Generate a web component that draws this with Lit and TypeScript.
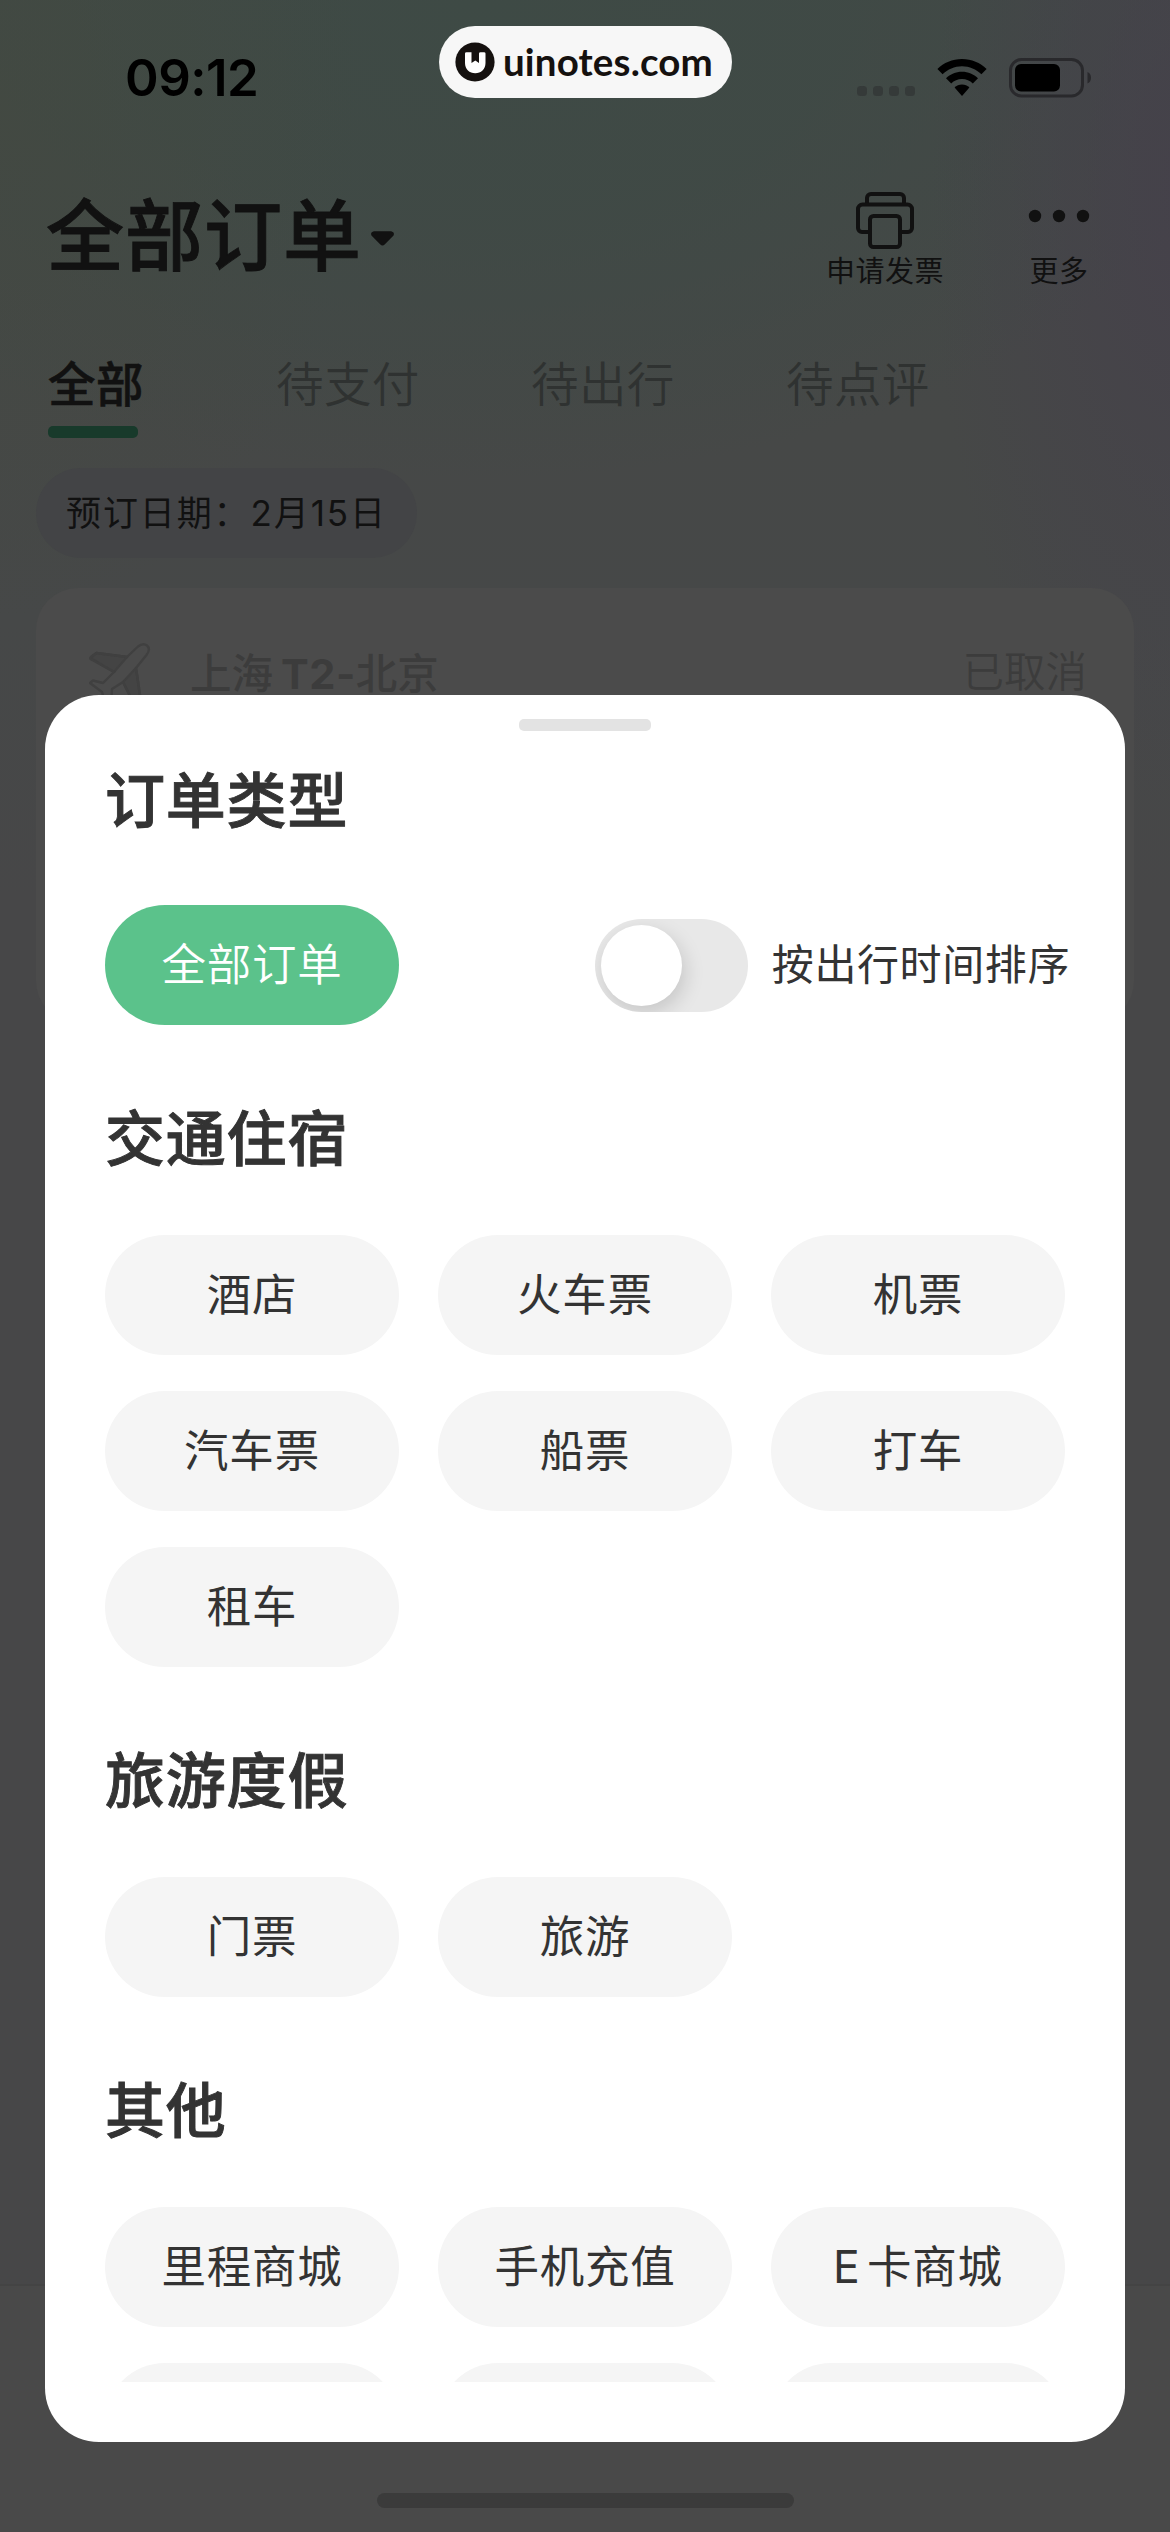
import { LitElement, html, css, svg } from "lit";
import { customElement } from "lit/decorators.js";

interface Section {
  title: string;
  items: string[];
}

const TABS = ["全部", "待支付", "待出行", "待点评"];

const SECTIONS: Section[] = [
  { title: "交通住宿", items: ["酒店", "火车票", "机票", "汽车票", "船票", "打车", "租车"] },
  { title: "旅游度假", items: ["门票", "旅游"] },
  { title: "其他", items: ["里程商城", "手机充值", "E 卡商城", "", "", ""] },
];

const wifiIcon = svg`<svg class="wifi" viewBox="0 0 50 37">
  <path d="M25 0C34.6 0 43.300 3.700 49.600 10.100L44.400 15.300C39.300 10.300 32.500 7.300 25 7.300S10.700 10.300 5.600 15.300L.4 10.100C6.700 3.700 15.400 0 25 0Z"/>
  <path d="M25 12.700C31.200 12.700 36.800 15.200 41 19.200L35.800 24.400C33 21.700 29.200 20.100 25 20.100S17 21.700 14.200 24.400L9 19.200C13.200 15.200 18.800 12.700 25 12.700Z"/>
  <path d="M25 25.400C27.900 25.400 30.500 26.600 32.400 28.600L25 37L17.600 28.600C19.500 26.600 22.100 25.400 25 25.400Z"/>
</svg>`;

const batteryIcon = svg`<svg class="battery" viewBox="0 0 84 40">
  <rect x="1.500" y="1.500" width="72" height="36.500" rx="11" fill="none" stroke="#29292c" stroke-width="3"/>
  <rect x="6" y="6" width="45" height="27.500" rx="6" fill="#000"/>
  <path d="M78.500 14C81 15 82 17.300 82 19.750S81 24.500 78.500 25.500Z" fill="#29292c"/>
</svg>`;

const printerIcon = svg`<svg class="printer" viewBox="0 0 60 60" fill="none" stroke="#111" stroke-width="4">
  <path d="M12 13V7a4 4 0 0 1 4-4H45a4 4 0 0 1 4 4V13"/>
  <path d="M15 41H7A4 4 0 0 1 3 37V18A4.500 4.500 0 0 1 7.500 13.500H52.500A4.500 4.500 0 0 1 57 18V37A4 4 0 0 1 53 41H45"/>
  <rect x="15" y="25" width="30" height="31" rx="3.500"/>
</svg>`;

const planeIcon = svg`<svg class="plane" viewBox="14 12 62 72" fill="none" stroke="#404040" stroke-width="2.400" stroke-linejoin="round">
  <path d="M52 27L21.500 23L15.500 28L39 42Z" fill="#444444"/>
  <path d="M61 38L66 72L60 76L48 52Z" fill="#444444"/>
  <path d="M52 27L63 16.500Q68 12.500 72 15.500Q76 19 71.500 25L61 38L66 72L60 76L48 52L37 59L36 76L30 72L27 62L15 53L18 50.500L28 53L39 42L15.500 29Q14 27 21.500 23Z"/>
</svg>`;

const logoIcon = svg`<svg class="logo" viewBox="0 0 40 40">
  <circle cx="20" cy="20" r="19.600" fill="#15110f"/>
  <path d="M10 11.500Q10 10.200 11.500 10.200H16.500V21L20.300 18.500L24 21V11.500Q24 10.200 25.500 10.200H29Q30.500 10.200 30.500 11.500V21C30.500 27.500 26 31.300 20.250 31.300S10 27.500 10 21Z" fill="#fff"/>
</svg>`;

@customElement("app-root")
export class AppRoot extends LitElement {
  static styles = css`
    :host {
      display: block;
      font-family: Inter, "Noto Sans CJK SC", sans-serif;
    }
    .screen {
      position: relative;
      width: 1170px;
      height: 2532px;
      overflow: hidden;
      display: flex;
      flex-direction: column;
      color: #111;
      background:
        radial-gradient(ellipse 260px 620px at 1190px 190px, rgba(69, 64, 75, 0.85) 0%, rgba(69, 64, 75, 0) 100%),
        radial-gradient(ellipse 360px 520px at 0px 100px, rgba(67, 73, 64, 0.65) 0%, rgba(67, 73, 64, 0) 100%),
        radial-gradient(ellipse 800px 480px at 480px 0px, #3e4a45 0%, rgba(62, 74, 69, 0.75) 45%, rgba(62, 74, 69, 0) 100%),
        linear-gradient(#444847 0px, #464847 430px, #464848 620px, #474748 900px);
    }
    .status {
      height: 155px;
      box-sizing: border-box;
      padding: 0 77px 0 125px;
      display: flex;
      align-items: center;
      justify-content: space-between;
      color: #000;
    }
    .time {
      font-weight: 600;
      font-size: 51px;
      line-height: 60px;
      letter-spacing: -0.5px;
    }
    .indicators {
      display: flex;
      align-items: center;
      gap: 22px;
    }
    .signal {
      display: flex;
      gap: 6px;
      padding-top: 26px;
    }
    .signal i {
      width: 10px;
      height: 10px;
      border-radius: 3.5px;
      background: #353a39;
    }
    .wifi { width: 50px; height: 37px; }
    .battery { width: 84px; height: 40px; margin-top: 1px; }
    .header {
      height: 180px;
      box-sizing: border-box;
      padding: 35px 80px 0 46px;
      display: flex;
      justify-content: space-between;
    }
    .title {
      display: flex;
      align-items: center;
      gap: 8px;
      height: 92px;
      font-size: 78px;
      line-height: 92px;
      font-weight: 500;
      letter-spacing: 1px;
      -webkit-text-stroke: 0.9px currentColor;
    }
    .title span { padding-top: 2px; }
    .caret { width: 25px; height: 17px; margin-top: 4px; }
    .actions {
      display: flex;
      gap: 84px;
    }
    .action {
      display: flex;
      flex-direction: column;
      align-items: center;
      font-size: 29px;
      line-height: 40px;
      letter-spacing: 0.5px;
    }
    .printer, .dots { width: 60px; height: 60px; margin: 1px 0; }
    .dots { width: 62px; }
    .tabs {
      display: grid;
      grid-template-columns: 228px 255px 255px 255px;
      padding-left: 48px;
      height: 133px;
    }
    .tab {
      display: flex;
      flex-direction: column;
      align-items: flex-start;
      font-size: 47.500px;
      line-height: 70px;
      letter-spacing: 0.4px;
      padding-top: 15px;
      color: #2f3231;
      white-space: nowrap;
      font-weight: 350;
    }
    .tab.active {
      color: #111;
      font-weight: 500;
      -webkit-text-stroke: 0.6px currentColor;
    }
    .tab.active::after {
      content: "";
      flex: none;
      width: 90px;
      height: 12px;
      margin-top: 6px;
      border-radius: 5px;
      background: #183a2b;
    }
    .date {
      align-self: flex-start;
      margin-left: 36px;
      width: 381px;
      height: 90px;
      border-radius: 45px;
      background: #434446;
      box-sizing: border-box;
      padding-left: 30px;
      display: flex;
      align-items: center;
      white-space: pre;
      font-size: 35px;
      line-height: 50px;
      letter-spacing: 1.9px;
    }
    .order {
      margin: 30px 36px 0;
      height: 435px;
      box-sizing: border-box;
      border-radius: 42px;
      background: #4b4b4b;
      padding: 54px 47px 0 53px;
      display: flex;
      align-items: flex-start;
      color: #3c3c3c;
    }
    .plane { width: 62px; height: 72px; }
    .route {
      margin: 2px 0 0 39px;
      flex: 1;
      font-size: 41.500px;
      line-height: 60px;
      font-weight: 500;
      word-spacing: -3px;
    }
    .terminal { font-weight: 700; letter-spacing: 0.5px; }
    .state { font-size: 41.500px; line-height: 60px; font-weight: 350; }
    .footer {
      margin-top: auto;
      height: 248px;
      background: #494949;
      border-top: 2px solid #444444;
      box-sizing: border-box;
      display: flex;
      justify-content: center;
      align-items: flex-end;
      padding-bottom: 24px;
    }
    .home {
      width: 417px;
      height: 15px;
      border-radius: 8px;
      background: #3b3b3b;
    }
    .badge {
      position: absolute;
      left: 439px;
      top: 26px;
      width: 293px;
      height: 72px;
      border-radius: 36px;
      background: #f7f7f7;
      box-sizing: border-box;
      padding-left: 16px;
      display: flex;
      align-items: center;
      gap: 8px;
      color: #15110f;
      font-family: Lato, sans-serif;
      font-weight: 700;
      font-size: 38.500px;
      line-height: 48px;
      letter-spacing: 0.15px;
    }
    .badge span { padding-bottom: 2px; }
    .logo { width: 40px; height: 40px; }
    .sheet {
      position: absolute;
      left: 45px;
      top: 695px;
      width: 1080px;
      height: 1747px;
      border-radius: 54px;
      background: #fff;
      box-sizing: border-box;
      padding: 24px 50px 60px 60px;
      display: flex;
      flex-direction: column;
      color: #333;
    }
    .handle {
      width: 132px;
      height: 12px;
      margin-left: 414px;
      border-radius: 5px;
      background: #e3e3e3;
      flex: none;
    }
    .scroll {
      flex: 1;
      min-height: 0;
      overflow: hidden;
      padding-right: 10px;
    }
    .heading {
      margin: 0;
      height: 210px;
      box-sizing: border-box;
      padding-top: 70px;
      font-size: 60px;
      line-height: 88px;
      font-weight: 500;
      letter-spacing: 0.8px;
      -webkit-text-stroke: 0.9px currentColor;
    }
    .heading.first { height: 174px; padding-top: 26px; }
    .row {
      display: flex;
      justify-content: space-between;
      align-items: center;
    }
    .grid {
      display: grid;
      grid-template-columns: repeat(3, 294px);
      gap: 36px 39px;
    }
    .chip {
      width: 294px;
      height: 120px;
      border-radius: 60px;
      background: #f5f5f5;
      display: flex;
      align-items: center;
      justify-content: center;
      font-size: 44.500px;
      line-height: 64px;
      letter-spacing: 0.8px;
      word-spacing: -7px;
      font-weight: 400;
    }
    .chip.selected { background: #5bc28b; color: #fff; font-weight: 350; }
    .sort {
      display: flex;
      align-items: center;
      gap: 24px;
      font-size: 42px;
      line-height: 60px;
      letter-spacing: 0.6px;
      font-weight: 400;
      white-space: nowrap;
      margin-right: -5px;
    }
    .toggle {
      width: 153px;
      height: 93px;
      border-radius: 47px;
      background: #e8e8e8;
      box-sizing: border-box;
      padding: 6px;
      overflow: hidden;
    }
    .knob {
      width: 81px;
      height: 81px;
      border-radius: 50%;
      background: #fff;
      box-shadow: 3px 7px 20px rgba(0, 0, 0, 0.15);
    }
  `;

  render() {
    return html`
      <div class="screen">
        <div class="status">
          <span class="time">09:12</span>
          <div class="indicators">
            <div class="signal"><i></i><i></i><i></i><i></i></div>
            ${wifiIcon} ${batteryIcon}
          </div>
        </div>
        <div class="header">
          <div class="title">
            <span>全部订单</span>
            <svg class="caret" viewBox="0 0 26 17"><path d="M4 1H22Q26 2 24.500 5.500L15.500 14.500Q13 17 10.500 14.500L1.500 5.500Q0 2 4 1Z" fill="#111"/></svg>
          </div>
          <div class="actions">
            <div class="action">${printerIcon}<span>申请发票</span></div>
            <div class="action">
              <svg class="dots" viewBox="0 0 62 60" fill="#111"><circle cx="7" cy="25" r="6.200"/><circle cx="31" cy="25" r="6.200"/><circle cx="55" cy="25" r="6.200"/></svg>
              <span>更多</span>
            </div>
          </div>
        </div>
        <div class="tabs">
          ${TABS.map((t, i) => html`<div class="tab ${i === 0 ? "active" : ""}">${t}</div>`)}
        </div>
        <div class="date">预订日期：2月15日</div>
        <div class="order">
          ${planeIcon}
          <span class="route">上海 <span class="terminal">T2-</span>北京</span>
          <span class="state">已取消</span>
        </div>
        <div class="footer"><div class="home"></div></div>

        <div class="badge">${logoIcon}<span>uinotes.com</span></div>

        <div class="sheet">
          <div class="handle"></div>
          <div class="scroll">
            <h2 class="heading first">订单类型</h2>
            <div class="row">
              <div class="chip selected">全部订单</div>
              <div class="sort">
                <div class="toggle"><div class="knob"></div></div>
                <span>按出行时间排序</span>
              </div>
            </div>
            ${SECTIONS.map(
              (s) => html`
                <h2 class="heading">${s.title}</h2>
                <div class="grid">${s.items.map((t) => html`<div class="chip">${t}</div>`)}</div>
              `
            )}
          </div>
        </div>
      </div>
    `;
  }
}
